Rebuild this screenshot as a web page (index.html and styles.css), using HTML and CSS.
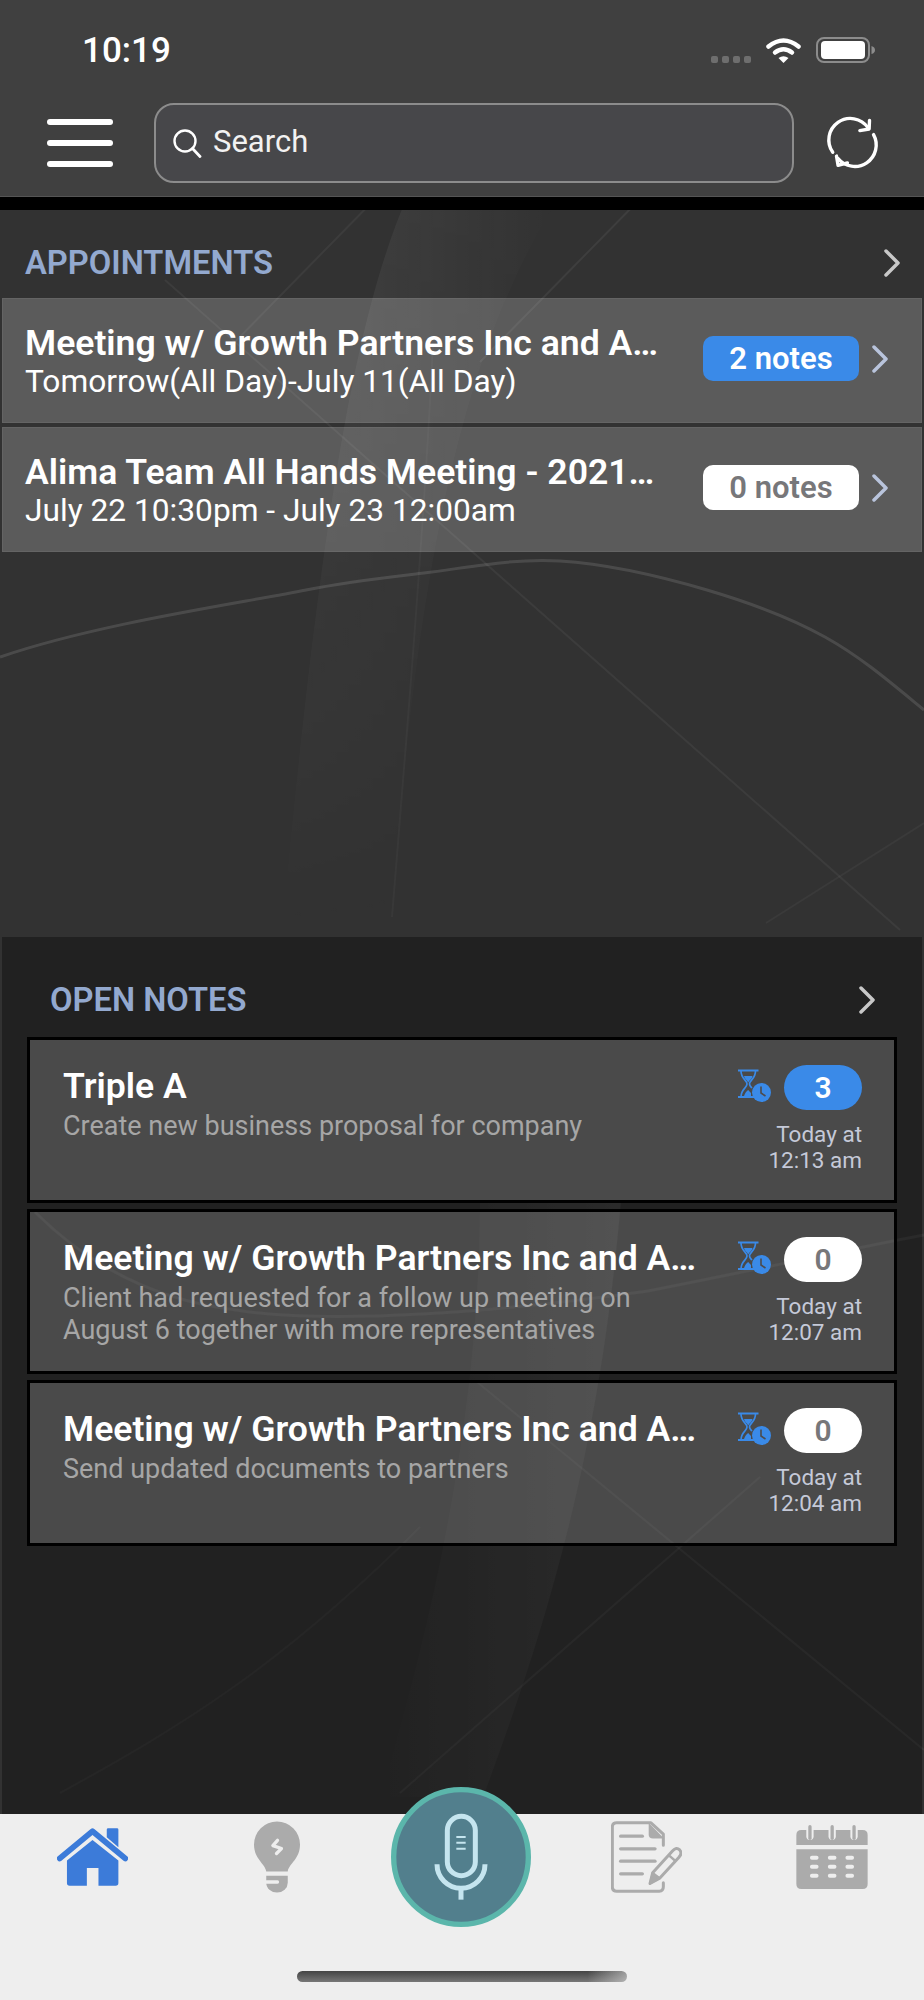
FILE: index.html
```html
<!DOCTYPE html>
<html lang="en">

<head>
    <meta charset="UTF-8">
    <meta name="viewport" content="width=device-width, initial-scale=1.0">
    <title>Home</title>
    <link rel="stylesheet" href="styles.css">
</head>

<body>
    <div class="phone">
        <!-- faint wallpaper behind the content -->
        <svg class="wallpaper" viewBox="0 0 924 1617" width="924" height="1617" aria-hidden="true">
            <defs>
                <linearGradient id="beamA" x1="0" y1="0" x2="1" y2="0">
                    <stop offset="0" stop-color="#fff" stop-opacity="0.09"/>
                    <stop offset="1" stop-color="#fff" stop-opacity="0"/>
                </linearGradient>
                <linearGradient id="beamFade" x1="0" y1="0" x2="0" y2="1">
                    <stop offset="0" stop-color="#fff"/>
                    <stop offset="0.55" stop-color="#fff" stop-opacity="0.35"/>
                    <stop offset="1" stop-color="#fff" stop-opacity="0"/>
                </linearGradient>
                <linearGradient id="beamB" x1="1" y1="0" x2="0" y2="0">
                    <stop offset="0" stop-color="#fff" stop-opacity="0.06"/>
                    <stop offset="1" stop-color="#fff" stop-opacity="0"/>
                </linearGradient>
                <mask id="fadeDown">
                    <rect width="924" height="740" fill="url(#beamFade)"/>
                </mask>
            </defs>
            <g mask="url(#fadeDown)">
                <path d="M407 0 C360 110 325 280 283 720 L392 720 C410 480 440 180 560 0 Z" fill="url(#beamA)"/>
            </g>
            <path d="M621 1003 C600 1250 550 1420 483 1600 L380 1600 C440 1400 480 1200 480 1003 Z" fill="url(#beamB)"/>
            <g fill="none" stroke="#fff">
                <path d="M0 460 C100 426 236 407 306 393 C345 385 382 381 424 376 C466 371 513 361 560 364 C607 367 663 380 707 393 C751 406 789 420 825 440 C861 460 890 485 924 513" stroke-opacity="0.12" stroke-width="3"/>
                <path d="M165 83 L900 733" stroke-opacity="0.05" stroke-width="2"/>
                <path d="M377 0 L230 150" stroke-opacity="0.05" stroke-width="2"/>
                <path d="M642 0 L480 165" stroke-opacity="0.06" stroke-width="2"/>
                <path d="M433 146 C425 320 405 560 392 720" stroke-opacity="0.03" stroke-width="2"/>
                <path d="M924 626 L766 726" stroke-opacity="0.04" stroke-width="2"/>
                <path d="M35 1015 C100 1080 170 1105 236 1113 C330 1128 500 1115 648 1094 C760 1072 850 1052 924 1038" stroke-opacity="0.06" stroke-width="3"/>
                <path d="M477 1185 L924 1553" stroke-opacity="0.05" stroke-width="2"/>
                <path d="M760 1280 L400 1596" stroke-opacity="0.05" stroke-width="2"/>
                <path d="M60 1596 C180 1530 280 1470 420 1330" stroke-opacity="0.03" stroke-width="2"/>
            </g>
        </svg>

        <header class="topbar">
            <div class="status">
                <span class="clock">10:19</span>
                <div class="status-icons">
                    <div class="signal"><i></i><i></i><i></i><i></i></div>
                    <svg class="wifi" viewBox="0 0 35 26" width="35" height="26">
                        <path d="M2.5 9.5 Q17.5 -2.5 32.500 9.500" fill="none" stroke="#fff" stroke-width="4.500" stroke-linecap="round"/>
                        <path d="M9 15.500 Q17.500 9 26 15.500" fill="none" stroke="#fff" stroke-width="4.500" stroke-linecap="round"/>
                        <path d="M12.500 21 Q17.500 17.500 22.500 21 L17.500 26 Z" fill="#fff"/>
                    </svg>
                    <svg class="battery" viewBox="0 0 59 26" width="59" height="26">
                        <rect x="1" y="1" width="52" height="24" rx="7" fill="none" stroke="#8c8c8c" stroke-width="2"/>
                        <rect x="5" y="4" width="44" height="18" rx="4" fill="#fff"/>
                        <path d="M55.500 9 Q59 10 59 13 Q59 16 55.500 17 Z" fill="#8c8c8c"/>
                    </svg>
                </div>
            </div>
            <div class="toolbar">
                <button class="menu-btn"><span></span><span></span><span></span></button>
                <div class="search">
                    <svg viewBox="0 0 30 30" width="30" height="30">
                        <circle cx="13" cy="13" r="10.500" fill="none" stroke="#fff" stroke-width="2.400"/>
                        <path d="M20.500 20.500 L28 28.500" fill="none" stroke="#fff" stroke-width="2.800" stroke-linecap="round"/>
                    </svg>
                    <span class="search-label">Search</span>
                </div>
                <svg class="refresh" viewBox="0 0 60 60" width="56" height="56">
                    <g fill="none" stroke="#fff" stroke-width="3.600" stroke-linecap="round" stroke-linejoin="round">
                        <path d="M8.300 40 A23 23 0 0 1 46 13.500"/>
                        <path d="M47.700 5.700 L47.300 15 L37.300 16.700"/>
                        <path d="M52 21 A23 23 0 0 1 14 46.600"/>
                        <path d="M12.300 45 L14 55 L24 52.300" transform="translate(0 -1)"/>
                    </g>
                </svg>
            </div>
        </header>

        <main class="content">
            <section class="appointments">
                <div class="section-head">
                    <h2>APPOINTMENTS</h2>
                    <svg class="chevron" viewBox="0 0 16 28" width="16" height="28"><path d="M2 2 L14 14 L2 26"/></svg>
                </div>
                <div class="appt-row">
                    <div class="appt-text">
                        <div class="appt-title">Meeting w/ Growth Partners Inc and A…</div>
                        <div class="appt-when">Tomorrow(All Day)-July 11(All Day)</div>
                    </div>
                    <span class="badge badge-blue">2 notes</span>
                    <svg class="chevron chevron-blue" viewBox="0 0 16 28" width="16" height="28"><path d="M2 2 L14 14 L2 26"/></svg>
                </div>
                <div class="appt-row">
                    <div class="appt-text">
                        <div class="appt-title">Alima Team All Hands Meeting - 2021…</div>
                        <div class="appt-when">July 22 10:30pm - July 23 12:00am</div>
                    </div>
                    <span class="badge badge-white">0 notes</span>
                    <svg class="chevron chevron-blue" viewBox="0 0 16 28" width="16" height="28"><path d="M2 2 L14 14 L2 26"/></svg>
                </div>
            </section>

            <section class="notes">
                <div class="section-head">
                    <h2>OPEN NOTES</h2>
                    <svg class="chevron" viewBox="0 0 16 28" width="16" height="28"><path d="M2 2 L14 14 L2 26"/></svg>
                </div>

                <article class="note-card">
                    <div class="note-text">
                        <div class="note-title">Triple A</div>
                        <div class="note-body">Create new business proposal for company</div>
                    </div>
                    <div class="note-meta">
                        <div class="note-status">
                            <svg class="hourglass" viewBox="0 0 33 33" width="33" height="33"><use href="#hourglass-shape"/></svg>
                            <span class="count count-blue">3</span>
                        </div>
                        <div class="note-time">Today at<br>12:13 am</div>
                    </div>
                </article>

                <article class="note-card">
                    <div class="note-text">
                        <div class="note-title">Meeting w/ Growth Partners Inc and A…</div>
                        <div class="note-body">Client had requested for a follow up meeting on<br>August 6 together with more representatives</div>
                    </div>
                    <div class="note-meta">
                        <div class="note-status">
                            <svg class="hourglass" viewBox="0 0 33 33" width="33" height="33"><use href="#hourglass-shape"/></svg>
                            <span class="count count-white">0</span>
                        </div>
                        <div class="note-time">Today at<br>12:07 am</div>
                    </div>
                </article>

                <article class="note-card">
                    <div class="note-text">
                        <div class="note-title">Meeting w/ Growth Partners Inc and A…</div>
                        <div class="note-body">Send updated documents to partners</div>
                    </div>
                    <div class="note-meta">
                        <div class="note-status">
                            <svg class="hourglass" viewBox="0 0 33 33" width="33" height="33"><use href="#hourglass-shape"/></svg>
                            <span class="count count-white">0</span>
                        </div>
                        <div class="note-time">Today at<br>12:04 am</div>
                    </div>
                </article>
            </section>
        </main>

        <nav class="tabbar">
            <div class="tabs">
                <div class="tab tab-home">
                    <svg viewBox="170 205 214 173" width="71" height="58">
                        <path d="M178 296 L277 214 L376 296" fill="none" stroke="#3c7bd9" stroke-width="17" stroke-linecap="round" stroke-linejoin="round"/>
                        <path d="M320 209 Q320 205 324 205 H351 Q355 205 355 209 V262 L320 232 Z" fill="#3c7bd9"/>
                        <path d="M200 302 L277 240 L355 302 V370 Q355 378 347 378 H295 V325 H260 V378 H208 Q200 378 200 370 Z" fill="#3c7bd9"/>
                    </svg>
                </div>
                <div class="tab tab-bulb">
                    <svg viewBox="763 183 139 215" width="46" height="72">
                        <path d="M800 334 C796 310 763 297 763 253 A69.500 70 0 0 1 902 253 C902 297 869 310 865 334 Z" fill="#ababab"/>
                        <path d="M800 347 H865 V368 A32.500 30 0 0 1 800 368 Z" fill="#ababab"/>
                        <path d="M800 366 H834" stroke="#eee" stroke-width="10" stroke-linecap="round"/>
                        <path d="M834 240 L820 256 L846 265 L831 280" fill="none" stroke="#eee" stroke-width="10" stroke-linecap="round" stroke-linejoin="round"/>
                    </svg>
                </div>
                <div class="tab"></div>
                <div class="tab tab-notes">
                    <svg viewBox="445 183 213 215" width="71" height="72">
                        <path d="M602 255 V222 L565 188 H462 Q449 188 449 201 V380 Q449 393 462 393 H590 Q602 393 602 380 V368" fill="none" stroke="#ababab" stroke-width="9" stroke-linejoin="round" stroke-linecap="round"/>
                        <path d="M558 188 V222 Q558 235 571 235 H604 Z" fill="#ababab"/>
                        <g stroke="#ababab" stroke-width="10" stroke-linecap="round">
                            <path d="M474 228 H539"/>
                            <path d="M474 266 H577"/>
                            <path d="M474 303 H577"/>
                            <path d="M474 341 H539"/>
                        </g>
                        <path d="M630 272 Q641 259 651 269 Q660 280 649 291 L591 354 L562 370 L570 338 Z" fill="#eee" stroke="#ababab" stroke-width="9" stroke-linejoin="round"/>
                        <path d="M562 370 L570 338 L591 354 Z" fill="#ababab" stroke="#ababab" stroke-width="6" stroke-linejoin="round"/>
                        <path d="M618 285 L640 304" stroke="#ababab" stroke-width="7"/>
                    </svg>
                </div>
                <div class="tab tab-cal">
                    <svg viewBox="999 195 215 193" width="72" height="64">
                        <path d="M999 255 V225 Q999 210 1014 210 H1199 Q1214 210 1214 225 V255 Z" fill="#ababab"/>
                        <path d="M999 268 H1214 V373 Q1214 388 1199 388 H1014 Q999 388 999 373 Z" fill="#ababab"/>
                        <g stroke="#eee" stroke-width="22" stroke-linecap="round">
                            <path d="M1040 205 V229"/>
                            <path d="M1107 205 V229"/>
                            <path d="M1173 205 V229"/>
                        </g>
                        <g stroke="#ababab" stroke-width="10" stroke-linecap="round">
                            <path d="M1040 200 V235"/>
                            <path d="M1107 200 V235"/>
                            <path d="M1173 200 V235"/>
                        </g>
                        <g stroke="#eee" stroke-width="12" stroke-linecap="round">
                            <path d="M1046 294 H1060 M1100 294 H1114 M1153 294 H1167"/>
                            <path d="M1046 321 H1060 M1100 321 H1114 M1153 321 H1167"/>
                            <path d="M1046 348 H1060 M1100 348 H1114 M1153 348 H1167"/>
                        </g>
                    </svg>
                </div>
            </div>
            <svg class="mic" viewBox="32 20 420 420" width="140" height="140">
                <circle cx="242" cy="230" r="202" fill="#527f8d" stroke="#5bb6ab" stroke-width="16"/>
                <g fill="none" stroke="#c5e5ef">
                    <rect x="201" y="108" width="84" height="178" rx="42" stroke-width="15"/>
                    <path d="M170 252 A72 72 0 0 0 314 252" stroke-width="15"/>
                    <path d="M242 322 V358" stroke-width="15"/>
                    <path d="M228 170 H256 M228 187 H256 M228 205 H256" stroke-width="6"/>
                </g>
            </svg>
            <div class="home-indicator"></div>
        </nav>
    </div>

    <svg class="sprites" width="0" height="0" aria-hidden="true">
        <defs>
            <g id="hourglass-shape">
                <path d="M0 1.500 H20.500 M0 28 H20.500" stroke="#3a8ae8" stroke-width="2.200" fill="none"/>
                <path d="M3 2 C3 10 9 11 9 15 C9 19 3 20 3 28 M17.500 2 C17.500 10 11.500 11 11.500 15 C11.500 17 13 18 14 19" stroke="#3a8ae8" stroke-width="1.700" fill="none"/>
                <path d="M6 7 H14.500 C14 10 11.500 11 10.200 13.500 C9 11 6.500 10 6 7 Z" fill="#3a8ae8"/>
                <path d="M6 27 C7 24 8.500 22 10.200 21 C11 22 12 23 13 24 L13 27 Z" fill="#3a8ae8"/>
                <circle cx="23.500" cy="23.500" r="9.500" fill="#3a8ae8"/>
                <path d="M23 17.500 V24 L27.500 27" stroke="#4d4c4e" stroke-width="1.600" fill="none"/>
            </g>
        </defs>
    </svg>
</body>

</html>
```

FILE: styles.css
```css
* {
    box-sizing: border-box;
}

body {
    margin: 0;
    background-color: #323232;
    font-family: Roboto, "Liberation Sans", sans-serif;
    color: #fff;
}

.phone {
    position: relative;
    width: 924px;
    height: 2000px;
    display: flex;
    flex-direction: column;
    overflow: hidden;
}

.wallpaper {
    position: absolute;
    left: 0;
    top: 197px;
}

.sprites {
    position: absolute;
}

/* top bar */
.topbar {
    position: relative;
    height: 197px;
    background-color: #404040;
    border-bottom: 1px solid #555;
}

.status {
    height: 90px;
    padding: 31px 49px 0 82px;
    display: flex;
    justify-content: space-between;
}

.clock {
    font-size: 35px;
    font-weight: 500;
    line-height: 40px;
}

.status-icons {
    display: flex;
    align-items: flex-start;
    padding-top: 6px;
}

.signal {
    display: flex;
    gap: 3.7px;
    margin-top: 19px;
    margin-right: 15px;
}

.signal i {
    width: 7.3px;
    height: 7.3px;
    border-radius: 2px;
    background-color: #6e6e6e;
}

.battery {
    margin-left: 15px;
}

.toolbar {
    display: flex;
    align-items: center;
    padding: 13px 0 0 47px;
}

.menu-btn {
    width: 66px;
    height: 48px;
    padding: 0;
    border: 0;
    background: none;
    display: flex;
    flex-direction: column;
    justify-content: space-between;
}

.menu-btn span {
    display: block;
    height: 6px;
    border-radius: 3px;
    background-color: #fff;
}

.search {
    width: 640px;
    height: 80px;
    margin-left: 41px;
    padding-left: 16px;
    border: 2px solid #8c8c8c;
    border-radius: 20px;
    background-color: #47474a;
    display: flex;
    align-items: center;
    gap: 11px;
    font-size: 31px;
    color: #f2f2f2;
}

.search-label {
    padding-bottom: 3px;
}

.refresh {
    margin-left: 31px;
}

/* content */
.content {
    position: relative;
    flex: 1;
    border-top: 13px solid #000;
    display: flex;
    flex-direction: column;
}

.appointments {
    height: 727px;
    padding: 0 2px;
}

.section-head {
    display: flex;
    justify-content: space-between;
    align-items: center;
}

.section-head h2 {
    margin: 0;
    font-size: 32.7px;
    font-weight: 600;
    color: #93a9cf;
}

.chevron {
    fill: none;
    stroke: #c8c8c8;
    stroke-width: 3.5;
    stroke-linecap: round;
    stroke-linejoin: round;
}

.chevron-blue {
    stroke: #b9c4dc;
}

.appointments .section-head {
    height: 88px;
    padding: 17px 22px 0 23px;
}

.appt-row {
    height: 125px;
    margin-bottom: 4px;
    padding-left: 22px;
    padding-bottom: 4px;
    border: 1px solid rgba(255, 255, 255, 0.06);
    background-color: rgba(255, 255, 255, 0.2);
    display: flex;
    align-items: center;
}

.appt-text {
    flex: 1;
    min-width: 0;
    padding-top: 4px;
}

.appt-title {
    font-size: 35.6px;
    font-weight: 600;
    line-height: 42px;
    white-space: nowrap;
}

.appt-when {
    font-size: 31.7px;
    line-height: 36px;
}

.badge {
    width: 156px;
    height: 45px;
    border-radius: 10px;
    display: flex;
    justify-content: center;
    align-items: center;
    font-size: 31px;
    font-weight: 600;
}

.badge-blue {
    background-color: #3a8ae8;
    color: #fff;
}

.badge-white {
    background-color: #fff;
    color: #77777a;
}

.appt-row .chevron {
    margin: 0 33px 0 13px;
}

.notes {
    flex: 1;
    margin: 0 2px;
    padding: 0 25px;
    background-color: rgba(0, 0, 0, 0.32);
}

.notes .section-head {
    height: 100px;
    padding: 26px 22px 0 23px;
}

.note-card {
    height: 165.5px;
    margin-bottom: 6px;
    padding: 25px 32px 0 33px;
    border: 3px solid #000;
    background-color: rgba(255, 255, 255, 0.19);
    display: flex;
    justify-content: space-between;
}

.note-title {
    font-size: 35.6px;
    font-weight: 600;
    line-height: 42px;
    white-space: nowrap;
}

.note-body {
    margin-top: 3px;
    font-size: 27px;
    line-height: 32px;
    color: #a6a6a6;
}

.note-meta {
    width: 124px;
    display: flex;
    flex-direction: column;
    align-items: flex-end;
}

.note-status {
    display: flex;
    align-items: flex-start;
    gap: 13px;
}

.hourglass {
    margin-top: 4px;
}

.count {
    width: 78px;
    height: 45px;
    border-radius: 23px;
    display: flex;
    justify-content: center;
    align-items: center;
    font-size: 30px;
    font-weight: 600;
}

.count-blue {
    background-color: #3a8ae8;
    color: #fff;
}

.count-white {
    background-color: #fff;
    color: #77777a;
}

.note-time {
    margin-top: 11px;
    font-size: 22.5px;
    line-height: 26px;
    text-align: right;
    color: #c5c9d8;
    white-space: nowrap;
}

/* bottom tabs */
.tabbar {
    position: relative;
    height: 186px;
    background-color: #eee;
}

.tabs {
    height: 157px;
    display: grid;
    grid-template-columns: repeat(5, 1fr);
}

.tab {
    display: flex;
    justify-content: center;
}

.tab-home {
    padding-top: 14px;
}

.tab-bulb,
.tab-notes {
    padding-top: 7px;
}

.tab-cal {
    padding-top: 11px;
}

.mic {
    position: absolute;
    left: 391px;
    top: -27px;
}

.home-indicator {
    width: 330px;
    height: 11px;
    margin-left: 297px;
    border-radius: 6px;
    background: linear-gradient(to right, transparent 88%, rgba(238, 238, 238, 0.5)), linear-gradient(#444, #777);
}
```
